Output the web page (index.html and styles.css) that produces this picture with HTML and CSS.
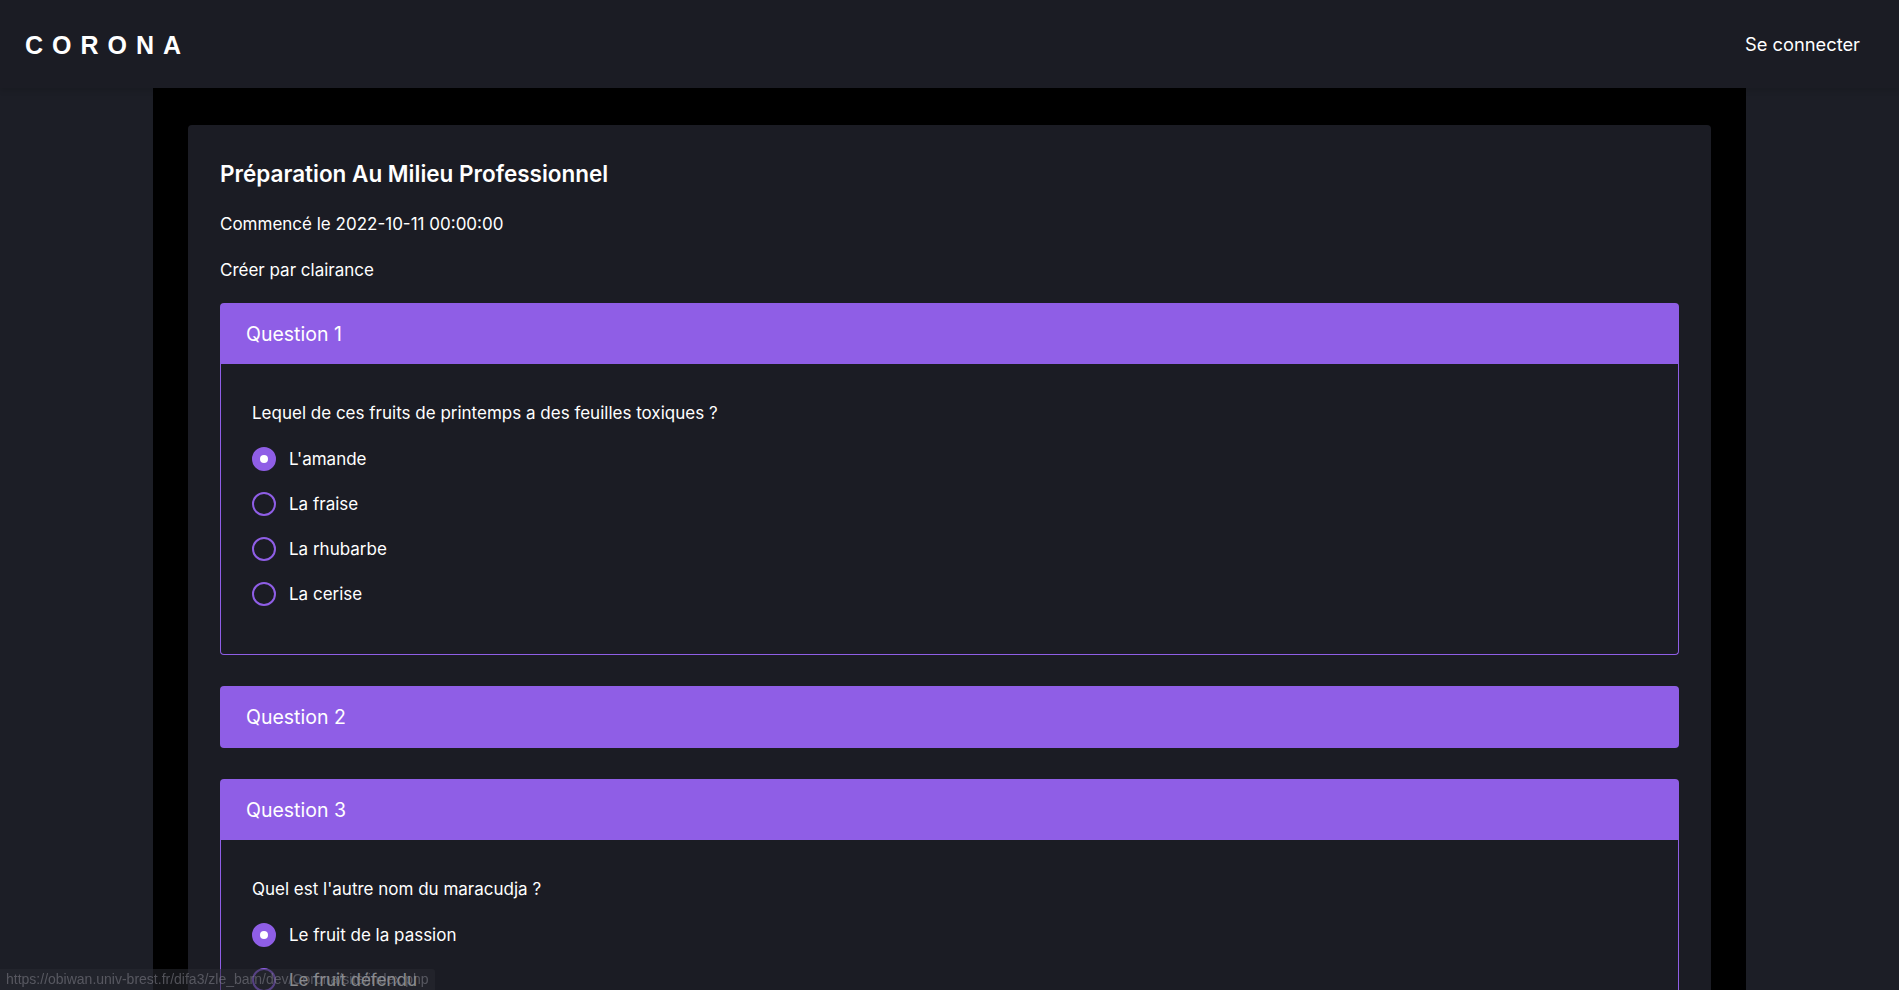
FILE: index.html
```html
<!DOCTYPE html>
<html lang="fr">
<head>
<meta charset="utf-8">
<title>Corona</title>
<link rel="stylesheet" href="styles.css">
</head>
<body>
<header class="topbar">
  <div class="logo">CORONA</div>
  <a class="login" href="#">Se connecter</a>
</header>
<main class="frame">
  <section class="card">
    <h1 class="title">Préparation Au Milieu Professionnel</h1>
    <p class="meta">Commencé le 2022-10-11 00:00:00</p>
    <p class="meta">Créer par clairance</p>

    <div class="qcard">
      <div class="qhead">Question 1</div>
      <div class="qbody">
        <p class="qtext">Lequel de ces fruits de printemps a des feuilles toxiques ?</p>
        <label class="opt"><span class="radio checked"></span>L'amande</label>
        <label class="opt"><span class="radio"></span>La fraise</label>
        <label class="opt"><span class="radio"></span>La rhubarbe</label>
        <label class="opt"><span class="radio"></span>La cerise</label>
      </div>
    </div>

    <div class="qcard">
      <div class="qhead closed">Question 2</div>
    </div>

    <div class="qcard">
      <div class="qhead">Question 3</div>
      <div class="qbody">
        <p class="qtext">Quel est l'autre nom du maracudja ?</p>
        <label class="opt"><span class="radio checked"></span>Le fruit de la passion</label>
        <label class="opt"><span class="radio"></span>Le fruit défendu</label>
        <label class="opt"><span class="radio"></span>Le fruit du dragon</label>
        <label class="opt"><span class="radio"></span>La grenadille</label>
      </div>
    </div>
  </section>
</main>
<div class="statusbar">https://obiwan.univ-brest.fr/difa3/zle_barn/dev/Corona/site/index.php</div>
</body>
</html>
```
FILE: styles.css
```css
* { box-sizing: border-box; }
html, body { margin: 0; padding: 0; }
body {
  background: #1c1e26;
  color: #ffffff;
  font-family: Inter, "Noto Sans", sans-serif;
  overflow: hidden;
  height: 990px;
}
.topbar {
  height: 88px;
  background: #1b1c24;
  display: flex;
  align-items: center;
  justify-content: space-between;
  padding: 0 39px 0 25px;
  box-shadow: 0 2px 6px rgba(0,0,0,0.15);
  position: relative;
  z-index: 1;
}
.logo {
  font-family: "Liberation Sans", Arial, sans-serif;
  font-weight: 700;
  font-size: 25px;
  letter-spacing: 0.36em;
  padding-top: 2px;
}
.login {
  color: #ffffff;
  text-decoration: none;
  font-size: 18.3px;
  font-weight: 400;
}
.frame {
  width: 1593px;
  margin: 0 auto;
  background: #000;
  padding: 37px 35px 0 35px;
  min-height: 902px;
}
.card {
  background: #1b1c24;
  border-radius: 4px;
  padding: 35px 32px 40px 32px;
}
.title {
  margin: 0 0 24px 0;
  font-size: 22.5px;
  font-weight: 600;
  line-height: 28px;
}
.meta {
  margin: 0 0 22px 0;
  font-size: 17px;
  line-height: 24px;
}
.meta + .meta { margin-bottom: 21px; }
.qcard {
  margin-bottom: 31px;
}
.qhead {
  background: #8f5ee6;
  height: 61px;
  display: flex;
  align-items: center;
  padding: 0 26px;
  font-size: 19.5px;
  font-weight: 400;
  border-radius: 4px 4px 0 0;
}
.qhead.closed { border-radius: 4px; height: 62px; }
.qbody {
  border: 1px solid #8f5ee6;
  border-top: none;
  border-radius: 0 0 4px 4px;
  padding: 37px 31px 48px 31px;
  display: flex;
  flex-direction: column;
  gap: 21px;
}
.qtext {
  margin: 0 0 1px 0;
  font-size: 17px;
  line-height: 24px;
}
.opt {
  display: flex;
  align-items: center;
  gap: 13px;
  font-size: 17px;
  line-height: 24px;
}
.radio {
  width: 24px;
  height: 24px;
  border-radius: 50%;
  border: 2px solid #8f5ee6;
  flex: none;
  position: relative;
}
.radio.checked {
  background: #8f5ee6;
}
.radio.checked::after {
  content: "";
  position: absolute;
  width: 8px;
  height: 8px;
  border-radius: 50%;
  background: #fff;
  left: 6px;
  top: 6px;
}
.statusbar {
  position: fixed;
  left: 0;
  bottom: 0;
  padding: 2px 6px 3px 6px;
  background: rgba(40,42,50,0.55);
  color: rgba(140,140,150,0.5);
  font-family: "Liberation Sans", Arial, sans-serif;
  font-size: 14px;
  border-top-right-radius: 3px;
}
```
